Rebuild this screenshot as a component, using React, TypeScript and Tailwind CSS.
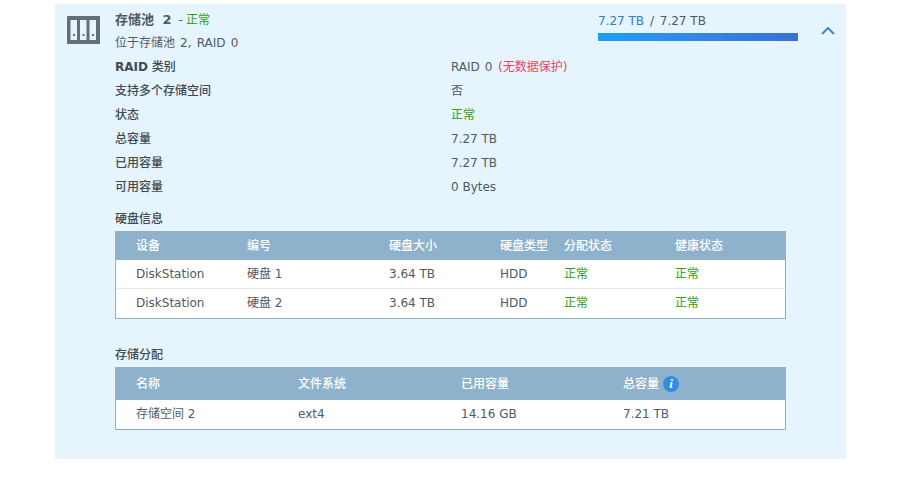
const font = { fontFamily: '"DejaVu Sans", "Noto Sans CJK SC", sans-serif' };

const details: [React.ReactNode, React.ReactNode][] = [
  [<><span className="font-bold">RAID</span> 类别</>, <span className="[word-spacing:1px]">RAID 0 <span className="ml-[1px] text-[#e64560]">(无数据保护)</span></span>],
  ["支持多个存储空间", "否"],
  ["状态", <span className="text-[#2f9e0f]">正常</span>],
  ["总容量", "7.27 TB"],
  ["已用容量", "7.27 TB"],
  ["可用容量", "0 Bytes"],
];

const disks = [
  ["DiskStation", "硬盘 1", "3.64 TB", "HDD", "正常", "正常"],
  ["DiskStation", "硬盘 2", "3.64 TB", "HDD", "正常", "正常"],
];

function PoolIcon() {
  return (
    <svg width="33" height="28" viewBox="0 0 33 28" className="mt-[12px] ml-3 shrink-0">
      <path fillRule="evenodd" fill="#636d7b" d="M1 0h31a1 1 0 0 1 1 1v26a1 1 0 0 1-1 1H1a1 1 0 0 1-1-1V1a1 1 0 0 1 1-1zM3.500 4v20h6.500V4zM13 4v20h6.500V4zM22.500 4v20h6.500V4z" />
      <rect x="6" y="18" width="2" height="2" fill="#636d7b" />
      <rect x="15.500" y="18" width="2" height="2" fill="#636d7b" />
      <rect x="25" y="18" width="2" height="2" fill="#636d7b" />
    </svg>
  );
}

export default function App() {
  return (
    <div style={font} className="h-[480px] w-[900px] overflow-hidden bg-white pt-1 pl-[55px] text-xs text-[#505a64]">
      <div className="flex h-[455px] w-[791px] bg-[#e6f4fe]">
        <PoolIcon />
        <div className="ml-[15px] w-[671px]">
          {/* Header */}
          <div className="relative">
            <div className="flex h-[28px] items-end pb-[4px]">
              <span className="text-[13px] font-bold [word-spacing:4px]">存储池 2</span>
              <span className="ml-[7px]">-</span>
              <span className="ml-[3px] text-[#2f9e0f]">正常</span>
            </div>
            <div className="flex h-[22px] items-center [word-spacing:1.300px]">位于存储池 2, RAID 0</div>
            <div className="absolute top-[8px] left-[483px] w-[200px]">
              <div className="h-[17px] pt-px leading-[17px] [word-spacing:2px]">
                <span className="text-[#2a7fd4] [word-spacing:0]">7.27 TB</span> / <span className="[word-spacing:0]">7.27 TB</span>
              </div>
              <div className="mt-[4px] h-2 w-[200px] bg-gradient-to-r from-[#1e9df5] to-[#3a70d8]" />
            </div>
            <svg width="14" height="8" viewBox="0 0 14 8" className="absolute top-[23px] left-[706px]" fill="none" stroke="#3d85c0" strokeWidth="1.800">
              <path d="M1 7l6-6 6 6" />
            </svg>
          </div>

          {/* Details */}
          <div className="mt-[1px]">
            {details.map(([label, value], i) => (
              <div key={i} className="flex h-6 items-center">
                <div className="w-[336px] font-medium text-[#414a54]">{label}</div>
                <div>{value}</div>
              </div>
            ))}
          </div>

          {/* Disks */}
          <div className="mt-[10px] flex h-[20px] items-center font-medium text-[#414a54]">硬盘信息</div>
          <div className="mt-[2px] border-x border-b border-[#8fb2cc]">
            <div className="grid h-[29px] grid-cols-[111px_142px_111px_64px_111px_1fr] items-center bg-[#8fb2cc] pl-[20px] font-medium text-white">
              <div>设备</div>
              <div>编号</div>
              <div>硬盘大小</div>
              <div>硬盘类型</div>
              <div>分配状态</div>
              <div>健康状态</div>
            </div>
            {disks.map((row, i) => (
              <div key={i} className={`grid h-[29px] grid-cols-[111px_142px_111px_64px_111px_1fr] items-center bg-white pl-[20px] ${i === 0 ? "border-b border-[#e6ebef]" : "pb-px"}`}>
                <div>{row[0]}</div>
                <div>{row[1]}</div>
                <div>{row[2]}</div>
                <div>{row[3]}</div>
                <div className="text-[#2f9e0f]">{row[4]}</div>
                <div className="text-[#2f9e0f]">{row[5]}</div>
              </div>
            ))}
          </div>

          {/* Volumes */}
          <div className="mt-[26px] flex h-[20px] items-center font-medium text-[#414a54]">存储分配</div>
          <div className="mt-[2px] border-x border-b border-[#8fb2cc]">
            <div className="grid h-[33px] grid-cols-[162px_163px_162px_1fr] items-center bg-[#8fb2cc] pl-[20px] font-medium text-white">
              <div>名称</div>
              <div>文件系统</div>
              <div>已用容量</div>
              <div className="flex items-center gap-[4px]">
                总容量
                <span className="flex h-4 w-4 items-center justify-center rounded-full bg-[#2f8fe6] text-[13px] leading-none font-bold text-white italic" style={{ fontFamily: '"Liberation Serif", serif' }}>i</span>
              </div>
            </div>
            <div className="grid h-[29px] grid-cols-[162px_163px_162px_1fr] items-center bg-white pb-px pl-[20px]">
              <div>存储空间 2</div>
              <div>ext4</div>
              <div>14.16 GB</div>
              <div>7.21 TB</div>
            </div>
          </div>
        </div>
      </div>
    </div>
  );
}
